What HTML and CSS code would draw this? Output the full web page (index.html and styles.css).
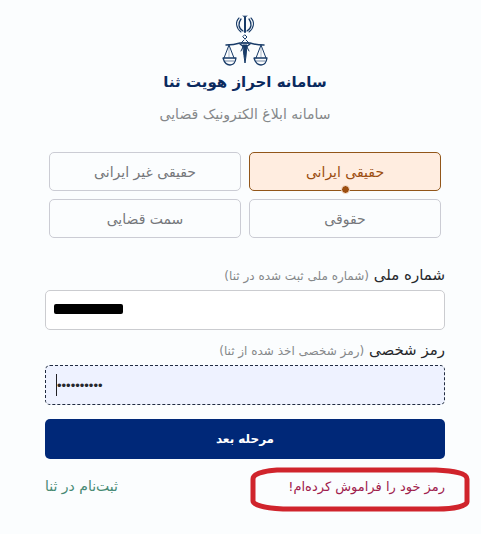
FILE: index.html
```html
<!DOCTYPE html>
<html lang="fa" dir="rtl">
<head>
<meta charset="utf-8">
<meta name="viewport" content="width=device-width, initial-scale=1">
<title>سامانه احراز هویت ثنا</title>
<link rel="stylesheet" href="styles.css">
</head>
<body>
<main class="page">
  <header class="brand">
    <svg class="logo" viewBox="0 0 46 53" fill="none" stroke="#183b68" stroke-linecap="round" stroke-linejoin="round" aria-hidden="true">
      <path d="M23 2v15" stroke-width="2"/>
      <path d="M21 1q1 1 2 0q1 1 2 0" stroke-width="1"/>
      <path d="M19 4c-3 4-3 9 2 12M27 4c3 4 3 9-2 12" stroke-width="1.3"/>
      <path d="M17 3c-4 4-3 10 2 14M29 3c4 4 3 10-2 14" stroke-width="1.1"/>
      <path d="M23 20l2 2-2 2-2-2zM22 25l-3 3h8l-3-3" stroke-width="1"/>
      <path d="M4 30q8 0 14-2h10q6 2 14 2" stroke-width="1.5"/>
      <path d="M18 29l4 3h2l4-3" stroke-width="1.5"/>
      <path d="M21 30h4l-1 11-1 7-1-7z" fill="#183b68" stroke-width="1"/>
      <path d="M19 36l2-4M27 36l-2-4" stroke-width="1"/>
      <path d="M7 30L2 43M7 30l5 13M39 30l-5 13M39 30l5 13" stroke-width="1"/>
      <path d="M7 32v10M39 32v10" stroke-width="1" opacity=".35"/>
      <path d="M1 43h13q-1 7-6 7t-7-7zM32 43h13q-1 7-6 7t-7-7z" stroke-width="1.3"/>
      <path d="M3 46h9M34 46h9" stroke-width="1" opacity=".6"/>
    </svg>
    <h1 class="title">سامانه احراز هویت ثنا</h1>
    <p class="subtitle">سامانه ابلاغ الکترونیک قضایی</p>
  </header>

  <form class="form">
    <div class="types" role="radiogroup" aria-label="نوع کاربر">
      <label class="type"><input class="type-input" type="radio" name="type" checked><span class="type-text">حقیقی ایرانی</span></label>
      <label class="type"><input class="type-input" type="radio" name="type"><span class="type-text">حقیقی غیر ایرانی</span></label>
      <label class="type"><input class="type-input" type="radio" name="type"><span class="type-text">حقوقی</span></label>
      <label class="type"><input class="type-input" type="radio" name="type"><span class="type-text">سمت قضایی</span></label>
    </div>

    <label class="label" for="nid">شماره ملی <small class="hint">(شماره ملی ثبت شده در ثنا)</small></label>
    <div class="field">
      <input class="input" id="nid" type="text" dir="ltr">
      <span class="redaction"></span>
    </div>

    <label class="label" for="pass">رمز شخصی <small class="hint">(رمز شخصی اخذ شده از ثنا)</small></label>
    <div class="field">
      <input class="input input-active" id="pass" type="password" dir="ltr" value="0000000000">
      <span class="caret"></span>
    </div>

    <button class="submit" type="button">مرحله بعد</button>
  </form>

  <nav class="links">
    <span class="marked">
      <a class="link forgot" href="#">رمز خود را فراموش کرده‌ام!</a>
      <svg class="ring" viewBox="0 0 220 46" preserveAspectRatio="none" fill="none" stroke="#d0242c" stroke-width="5" aria-hidden="true">
        <path d="M27 3H186C204 4 217 6 217 12V35C217 39 204 42 188 42H33C15 41 3 38 3 34V12C3 7 13 4 27 3Z"/>
      </svg>
    </span>
    <a class="link register" href="#">ثبت‌نام در ثنا</a>
  </nav>
</main>
</body>
</html>
```
FILE: styles.css
```css
* { box-sizing: border-box; }

body {
  margin: 0;
  background: #fbfdfe;
  color: #26282c;
  font-family: "DejaVu Sans", sans-serif;
  font-size: 14px;
}

.page { padding: 15px 36px 24px 45px; }

.brand {
  display: flex;
  flex-direction: column;
  align-items: center;
}

.logo { width: 46px; height: 53px; }

.title {
  margin: 0;
  color: #0b2a5e;
  font-size: 15px;
  line-height: 28px;
}

.subtitle {
  margin: 4px 0 0;
  color: #85888a;
  font-size: 14px;
  line-height: 28px;
}

.form { margin-top: 24px; }

.types {
  display: grid;
  grid-template-columns: 1fr 1fr;
  gap: 8px;
  padding: 0 4px;
  margin-bottom: 24px;
}

.type {
  position: relative;
  display: flex;
  align-items: center;
  justify-content: center;
  height: 39px;
  border: 1px solid #cbccd4;
  border-radius: 5px;
  color: #75777b;
  cursor: pointer;
}

.type:has(:checked) {
  border-color: #925619;
  background: #ffede0;
  color: #9c4e10;
}

.type:has(:checked)::after {
  content: "";
  position: absolute;
  bottom: -4px;
  left: calc(50% - 4px);
  width: 7px;
  height: 7px;
  border: 1px solid #ffede0;
  border-radius: 50%;
  background: #9c4e10;
}

.type-input {
  position: absolute;
  opacity: 0;
}

.label {
  display: block;
  font-size: 15px;
  line-height: 27px;
}

.hint {
  color: #85888a;
  font-size: 12px;
}

.field {
  position: relative;
  margin-bottom: 7px;
}

.input {
  display: block;
  width: 100%;
  height: 40px;
  padding: 0 11px;
  border: 1px solid #cbccd0;
  border-radius: 5px;
  background: #fff;
  color: #26282c;
  font: inherit;
}

.input-active {
  border: 1px dashed #202c40;
  background: #eef2ff;
  font-family: "Liberation Sans", sans-serif;
  font-size: 13px;
}

.redaction {
  position: absolute;
  left: 9px;
  top: 14px;
  width: 69px;
  height: 10px;
  border-radius: 2px;
  background: #000;
}

.caret {
  position: absolute;
  left: 11px;
  top: 9px;
  width: 1px;
  height: 22px;
  background: #202024;
}

.submit {
  display: block;
  width: 100%;
  height: 40px;
  margin-top: 14px;
  border: 0;
  border-radius: 5px;
  background: #002878;
  color: #fff;
  font: bold 12px "DejaVu Sans", sans-serif;
}

.links {
  display: flex;
  justify-content: space-between;
  margin-top: 13px;
  line-height: 28px;
}

.marked { position: relative; }

.link { text-decoration: none; }

.forgot {
  color: #a0204c;
  font-size: 13px;
}

.register { color: #478a74; }

.ring {
  position: absolute;
  right: -25px;
  top: -5px;
  width: 220px;
  height: 46px;
  pointer-events: none;
}
```
